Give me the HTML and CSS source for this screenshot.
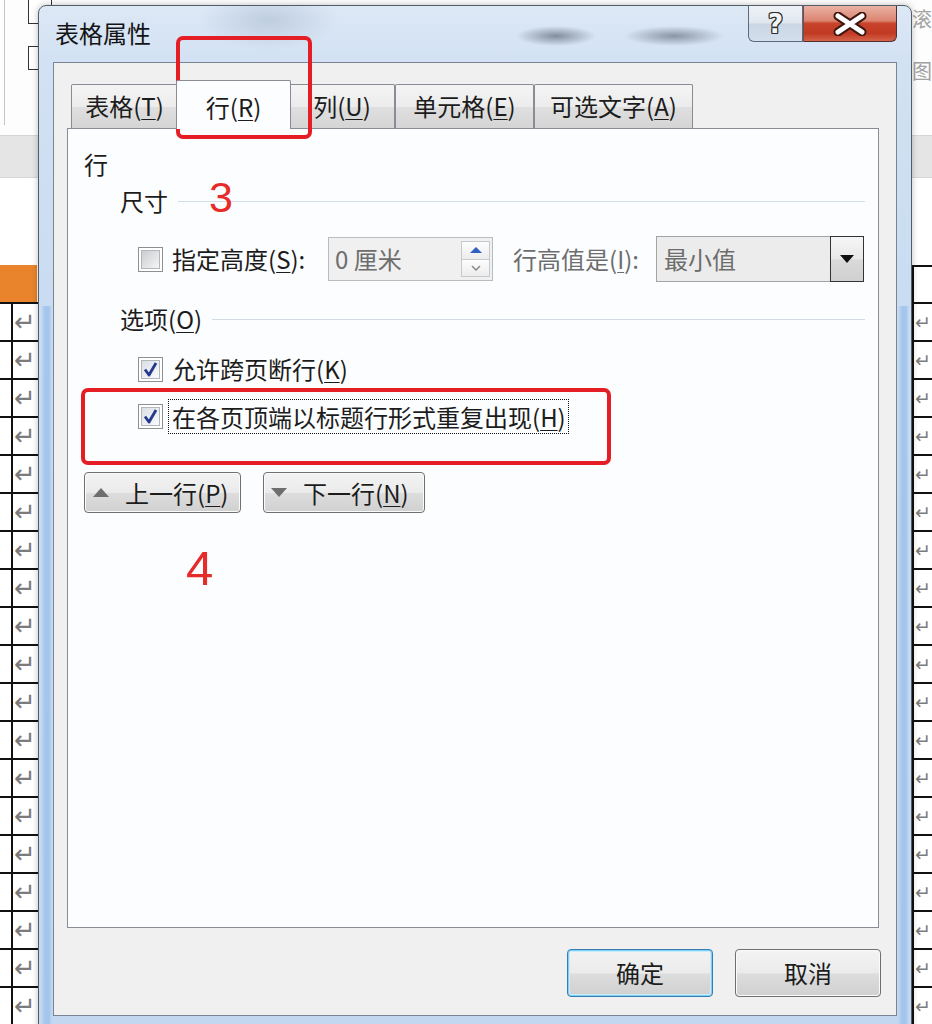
FILE: index.html
```html
<!DOCTYPE html>
<html lang="zh-CN">
<head>
<meta charset="utf-8">
<title>表格属性</title>
<link rel="stylesheet" href="styles.css">
</head>
<body>
<div class="desk">
  <div class="doc">
    <div class="doc-top">
      <div class="doc-top-left">
        <span class="vline"></span>
        <div class="boxes"><span class="dbox"></span><span class="dbox"></span></div>
      </div>
      <div class="doc-top-right"><span>字滚</span><span>全图</span></div>
    </div>
    <div class="doc-band"></div>
    <div class="doc-gap"></div>
    <div class="trow thead"><span class="c1"></span><span class="c2"></span><span class="cm"></span><span class="c4"></span></div>
    <div class="trow"><span class="c1"></span><span class="c2">↵</span><span class="cm"></span><span class="c4">↵</span></div>
    <div class="trow"><span class="c1"></span><span class="c2">↵</span><span class="cm"></span><span class="c4">↵</span></div>
    <div class="trow"><span class="c1"></span><span class="c2">↵</span><span class="cm"></span><span class="c4">↵</span></div>
    <div class="trow"><span class="c1"></span><span class="c2">↵</span><span class="cm"></span><span class="c4">↵</span></div>
    <div class="trow"><span class="c1"></span><span class="c2">↵</span><span class="cm"></span><span class="c4">↵</span></div>
    <div class="trow"><span class="c1"></span><span class="c2">↵</span><span class="cm"></span><span class="c4">↵</span></div>
    <div class="trow"><span class="c1"></span><span class="c2">↵</span><span class="cm"></span><span class="c4">↵</span></div>
    <div class="trow"><span class="c1"></span><span class="c2">↵</span><span class="cm"></span><span class="c4">↵</span></div>
    <div class="trow"><span class="c1"></span><span class="c2">↵</span><span class="cm"></span><span class="c4">↵</span></div>
    <div class="trow"><span class="c1"></span><span class="c2">↵</span><span class="cm"></span><span class="c4">↵</span></div>
    <div class="trow"><span class="c1"></span><span class="c2">↵</span><span class="cm"></span><span class="c4">↵</span></div>
    <div class="trow"><span class="c1"></span><span class="c2">↵</span><span class="cm"></span><span class="c4">↵</span></div>
    <div class="trow"><span class="c1"></span><span class="c2">↵</span><span class="cm"></span><span class="c4">↵</span></div>
    <div class="trow"><span class="c1"></span><span class="c2">↵</span><span class="cm"></span><span class="c4">↵</span></div>
    <div class="trow"><span class="c1"></span><span class="c2">↵</span><span class="cm"></span><span class="c4">↵</span></div>
    <div class="trow"><span class="c1"></span><span class="c2">↵</span><span class="cm"></span><span class="c4">↵</span></div>
    <div class="trow"><span class="c1"></span><span class="c2">↵</span><span class="cm"></span><span class="c4">↵</span></div>
    <div class="trow"><span class="c1"></span><span class="c2">↵</span><span class="cm"></span><span class="c4">↵</span></div>
    <div class="trow"><span class="c1"></span><span class="c2">↵</span><span class="cm"></span><span class="c4">↵</span></div>
  </div>

  <div class="dialog">
    <div class="titlebar">
      <span class="title">表格属性</span>
      <div class="capbtns">
        <span class="cap cap-help">?</span>
        <span class="cap cap-close">
          <svg width="40" height="24" viewBox="0 0 40 24">
            <path d="M8 4 L32 20 M32 4 L8 20" stroke="#3d1710" stroke-width="9" stroke-linecap="round" fill="none"/>
            <path d="M8 4 L32 20 M32 4 L8 20" stroke="#ffffff" stroke-width="5" stroke-linecap="round" fill="none"/>
          </svg>
        </span>
      </div>
    </div>

    <div class="client">
      <div class="tabs">
        <span class="tab t1">表格(<u>T</u>)</span>
        <span class="tab t2 active">行(<u>R</u>)</span>
        <span class="tab t3">列(<u>U</u>)</span>
        <span class="tab t4">单元格(<u>E</u>)</span>
        <span class="tab t5">可选文字(<u>A</u>)</span>
      </div>

      <div class="panel">
        <div class="plabel">行</div>

        <div class="group-head"><span>尺寸</span><span class="gline"></span></div>

        <div class="row-size">
          <span class="cb">
            <svg width="25" height="25" viewBox="0 0 25 25">
              <defs><linearGradient id="g1" x1="0" y1="0" x2="1" y2="1"><stop offset="0" stop-color="#c9cbcf"/><stop offset="1" stop-color="#f7f7f7"/></linearGradient></defs>
              <rect x="0.5" y="0.5" width="24" height="24" fill="#fff" stroke="#8e8f8f"/>
              <rect x="3.5" y="3.5" width="18" height="18" fill="url(#g1)" stroke="#b3b6bb"/>
            </svg>
          </span>
          <span class="lbl lbl-h">指定高度(<u>S</u>):</span>
          <span class="spin">
            <span class="spin-val">0 厘米</span>
            <span class="spin-btns">
              <span class="sb"><span class="arr-up"></span></span>
              <span class="sb">
                <svg width="10" height="6" viewBox="0 0 10 6"><path d="M1 1 L5 5 L9 1" stroke="#8a8a8a" stroke-width="1.5" fill="none"/></svg>
              </span>
            </span>
          </span>
          <span class="lbl lbl-dis lbl-v">行高值是(<u>I</u>):</span>
          <span class="combo">
            <span class="combo-val">最小值</span>
            <span class="combo-btn"><span class="arr-down"></span></span>
          </span>
        </div>

        <div class="group-head gh2"><span>选项(<u>O</u>)</span><span class="gline"></span></div>

        <div class="chk-row r2">
          <span class="cb">
            <svg width="25" height="25" viewBox="0 0 25 25">
              <defs><linearGradient id="g2" x1="0" y1="0" x2="1" y2="1"><stop offset="0" stop-color="#d9dee6"/><stop offset="1" stop-color="#fbfcfd"/></linearGradient></defs>
              <rect x="0.5" y="0.5" width="24" height="24" fill="#fff" stroke="#8e8f8f"/>
              <rect x="3.5" y="3.5" width="18" height="18" fill="url(#g2)" stroke="#b3b6bb"/>
              <path d="M7 12.5 L11 18 L18 6" stroke="#e8ecf5" stroke-width="5" fill="none" stroke-linejoin="round"/>
              <path d="M7 12.5 L11 18 L18 6" stroke="#26398a" stroke-width="2.8" fill="none" stroke-linejoin="round"/>
            </svg>
          </span>
          <span class="lbl">允许跨页断行(<u>K</u>)</span>
        </div>

        <div class="chk-row r3">
          <span class="cb">
            <svg width="25" height="25" viewBox="0 0 25 25">
              <defs><linearGradient id="g3" x1="0" y1="0" x2="1" y2="1"><stop offset="0" stop-color="#d9dee6"/><stop offset="1" stop-color="#fbfcfd"/></linearGradient></defs>
              <rect x="0.5" y="0.5" width="24" height="24" fill="#fff" stroke="#8e8f8f"/>
              <rect x="3.5" y="3.5" width="18" height="18" fill="url(#g3)" stroke="#b3b6bb"/>
              <path d="M7 12.5 L11 18 L18 6" stroke="#e8ecf5" stroke-width="5" fill="none" stroke-linejoin="round"/>
              <path d="M7 12.5 L11 18 L18 6" stroke="#26398a" stroke-width="2.8" fill="none" stroke-linejoin="round"/>
            </svg>
          </span>
          <span class="lbl focus">在各页顶端以标题行形式重复出现(<u>H</u>)</span>
        </div>

        <div class="nav-btns">
          <button class="btn nav nav-prev"><span class="tri tri-up"></span><span class="nav-txt">上一行(<u>P</u>)</span></button>
          <button class="btn nav nav-next"><span class="tri tri-down"></span><span class="nav-txt">下一行(<u>N</u>)</span></button>
        </div>
      </div>

      <div class="footer">
        <button class="btn dlg default">确定</button>
        <button class="btn dlg">取消</button>
      </div>
    </div>
  </div>

  <div class="mark mark-tab"></div>
  <div class="mark mark-opt"></div>
  <span class="num num3">3</span>
  <span class="num num4">4</span>
</div>
</body>
</html>
```

FILE: styles.css
```css
* { box-sizing: border-box; }

body {
  margin: 0;
  font-family: "Noto Sans CJK SC", "Noto Sans", sans-serif;
  color: #1c1c1c;
}

.desk {
  position: relative;
  width: 932px;
  height: 1024px;
  overflow: hidden;
  background: #fff;
}

/* ---------- background document ---------- */
.doc {
  display: flex;
  flex-direction: column;
  width: 932px;
  height: 1024px;
}

.doc-top {
  height: 135px;
  flex-shrink: 0;
  display: flex;
  justify-content: space-between;
  background: #fdfdfd;
}

.doc-top-left { display: flex; }

.vline {
  margin-left: 4px;
  height: 125px;
  border-left: 1px solid #c4c4c4;
}

.boxes {
  margin-left: 23px;
  display: flex;
  flex-direction: column;
}

.dbox {
  width: 24px;
  height: 24px;
  border: 1px solid #333;
  border-top: none;
  background: #fff;
}

.dbox + .dbox {
  margin-top: 22px;
  border-top: 1px solid #333;
}

.doc-top-right {
  width: 40px;
  display: flex;
  flex-direction: column;
  gap: 30px;
  padding-top: 8px;
  font-size: 20px;
  line-height: 22px;
  color: #a2a2a2;
  white-space: nowrap;
}

.doc-band {
  height: 43px;
  flex-shrink: 0;
  background: #e5e5e5;
  border-top: 1px solid #d6d6d6;
  border-bottom: 1px solid #d6d6d6;
}

.doc-gap { height: 87px; flex-shrink: 0; background: #fff; }

.trow {
  display: flex;
  height: 38px;
  flex-shrink: 0;
  border-top: 2px solid #111;
}

.thead { height: 37px; border-top: none; }

.c1 { width: 13px; border-right: 2px solid #111; }
.c2 {
  width: 24px;
  display: flex;
  align-items: center;
  justify-content: center;
  font-family: "DejaVu Sans", sans-serif;
  font-size: 26px;
  line-height: 1;
  color: #7c7c7c;
}
.cm { flex: 1; }
.c4 {
  width: 20px;
  border-left: 2px solid #111;
  display: flex;
  align-items: center;
  justify-content: center;
  font-family: "DejaVu Sans", sans-serif;
  font-size: 19px;
  line-height: 1;
  color: #7c7c7c;
}

.thead .c1,
.thead .c2 { background: #e9842c; border-right: none; }
.thead .c4 { border-top: 2px solid #111; }

/* ---------- dialog window ---------- */
.dialog {
  position: absolute;
  left: 38px;
  top: 5px;
  width: 874px;
  height: 1036px;
  border: 1px solid #525c6a;
  border-radius: 8px 8px 0 0;
  padding: 0 14px;
  display: flex;
  flex-direction: column;
  background:
    radial-gradient(ellipse 40px 10px at 517px 30px, rgba(60, 70, 85, 0.55), rgba(60, 70, 85, 0)),
    radial-gradient(ellipse 50px 10px at 635px 30px, rgba(60, 70, 85, 0.5), rgba(60, 70, 85, 0)),
    radial-gradient(ellipse 70px 30px at 230px 14px, rgba(120, 140, 170, 0.28), rgba(120, 140, 170, 0)),
    linear-gradient(to right, rgba(160, 195, 236, 0) 2px, rgba(160, 195, 236, 0.9) 6px, rgba(160, 195, 236, 0.9) 10px, rgba(160, 195, 236, 0) 13px) left 0 top 300px / 14px 100% no-repeat,
    linear-gradient(to left, rgba(160, 195, 236, 0) 2px, rgba(160, 195, 236, 0.9) 5px, rgba(160, 195, 236, 0.9) 9px, rgba(160, 195, 236, 0) 13px) right 0 top 300px / 14px 100% no-repeat,
    linear-gradient(to bottom, #dde8f5 0, #d2e1f3 56px, #c9dcf1 300px, #c3d8f0 100%);
  box-shadow: 0 0 6px rgba(0, 0, 0, 0.25);
}

.titlebar {
  height: 56px;
  flex-shrink: 0;
  display: flex;
  justify-content: space-between;
  align-items: flex-start;
}

.title {
  margin: 12px 0 0 2px;
  font-size: 24px;
  line-height: 30px;
  color: #141414;
}

.capbtns { display: flex; }

.cap {
  height: 36px;
  display: flex;
  align-items: center;
  justify-content: center;
}

.cap-help {
  width: 55px;
  border: 1px solid #5b6a7e;
  border-top: none;
  border-radius: 0 0 0 6px;
  background: linear-gradient(#eef2f7, #e0e7ef 48%, #cbd6e3 52%, #d3dfec);
  font-family: "DejaVu Sans", sans-serif;
  font-weight: bold;
  font-size: 26px;
  color: #f4f4f4;
  text-shadow: 1px 0 0 #2e2e2e, -1px 0 0 #2e2e2e, 0 1px 0 #2e2e2e, 0 -1px 0 #2e2e2e,
    1px 1px 0 #2e2e2e, -1px -1px 0 #2e2e2e, 1px -1px 0 #2e2e2e, -1px 1px 0 #2e2e2e;
}

.cap-close {
  width: 94px;
  border: 1px solid #4e3030;
  border-top: none;
  border-left: 1px solid #7a4a4a;
  border-radius: 0 0 6px 0;
  background: linear-gradient(#eab2a4, #db8470 42%, #c8432b 50%, #c13a23 78%, #d5634a);
}

.client {
  flex: none;
  background: #f0f0f0;
  border: 1px solid #7a8594;
  display: flex;
  flex-direction: column;
}

/* tabs */
.tabs {
  display: flex;
  align-items: flex-end;
  height: 48px;
  margin-top: 17px;
  padding-left: 17px;
}

.tab {
  height: 44px;
  border: 1px solid #898c95;
  border-bottom: none;
  border-radius: 2px 2px 0 0;
  background: linear-gradient(#f4f4f4, #ececec 50%, #dfdfdf 52%, #d5d5d5);
  font-size: 24px;
  line-height: 42px;
  text-align: center;
  color: #1c1c1c;
  white-space: nowrap;
}

.t1 { width: 107px; }
.t3 { width: 106px; }
.t4 { width: 139px; }
.t5 { width: 159px; }

.tab.active {
  width: 115px;
  height: 49px;
  margin: 0 -2px -1px -2px;
  padding-top: 4px;
  line-height: 44px;
  position: relative;
  z-index: 1;
  background: #fcfdfe;
}

u { text-decoration: underline; text-underline-offset: 3px; text-decoration-thickness: 1px; }

/* panel */
.panel {
  height: 800px;
  margin: 0 17px 0 13px;
  border: 1px solid #898c95;
  background: #fcfdfe;
  display: flex;
  flex-direction: column;
  font-size: 24px;
}

.plabel {
  margin-top: 20px;
  padding-left: 16px;
  line-height: 30px;
}

.group-head {
  display: flex;
  align-items: center;
  height: 30px;
  margin-top: 7px;
  padding-left: 52px;
  padding-right: 13px;
  line-height: 30px;
}

.gh2 { margin-top: 22px; }

.gline {
  flex: 1;
  height: 1px;
  margin-left: 10px;
  background: #d3dbe4;
}

.row-size {
  display: flex;
  align-items: center;
  height: 46px;
  margin-top: 20px;
  padding-left: 70px;
}

.cb { width: 25px; height: 25px; display: block; flex-shrink: 0; }
.cb svg { display: block; }

.lbl { line-height: 30px; white-space: nowrap; }
.lbl-h { width: 156px; margin-left: 9px; }
.lbl-dis { color: #6d6d6d; }
.lbl-v { width: 143px; margin-left: 20px; }

.spin {
  width: 165px;
  height: 44px;
  display: flex;
  align-items: center;
  border: 1px solid #b8bbc0;
  background: #f0f0f0;
}

.spin-val {
  flex: 1;
  padding-left: 6px;
  color: #6d6d6d;
  line-height: 30px;
}

.spin-btns {
  width: 29px;
  height: 36px;
  margin-right: 2px;
  display: flex;
  flex-direction: column;
}

.sb {
  flex: 1;
  border: 1px solid #c6c9ce;
  background: linear-gradient(#fdfdfd, #ececec);
  display: flex;
  align-items: center;
  justify-content: center;
}

.sb + .sb { border-top: none; }

.arr-up {
  width: 0;
  height: 0;
  border-left: 6px solid transparent;
  border-right: 6px solid transparent;
  border-bottom: 6px solid #2f5fbf;
}

.combo {
  width: 208px;
  height: 46px;
  display: flex;
  border: 1px solid #a3a3a3;
  background: #ececec;
}

.combo-val {
  flex: 1;
  padding-left: 7px;
  color: #6d6d6d;
  line-height: 44px;
}

.combo-btn {
  width: 34px;
  margin: -1px -1px -1px 0;
  border: 1px solid #333;
  background: linear-gradient(#f6f6f6, #e8e8e8 50%, #dadada 52%, #d0d0d0);
  display: flex;
  align-items: center;
  justify-content: center;
}

.arr-down {
  width: 0;
  height: 0;
  border-left: 7px solid transparent;
  border-right: 7px solid transparent;
  border-top: 8px solid #111;
}

.chk-row {
  display: flex;
  align-items: center;
  padding-left: 70px;
}

.r2 { height: 30px; margin-top: 20px; }
.r2 .lbl { margin-left: 9px; }

.r3 { height: 35px; margin-top: 15px; }
.r3 .lbl.focus {
  margin-left: 5px;
  padding: 0 2px 0 3px;
  border: 1px dotted #111;
  line-height: 33px;
}

.nav-btns {
  display: flex;
  gap: 22px;
  margin-top: 38px;
  padding-left: 16px;
}

.btn {
  font-family: "Noto Sans CJK SC", "Noto Sans", sans-serif;
  font-size: 24px;
  color: #1c1c1c;
  border: 1px solid #707070;
  border-radius: 4px;
  background: linear-gradient(#f3f3f3, #ebebeb 50%, #dddddd 52%, #d0d0d0);
  box-shadow: inset 0 0 0 1px #fbfbfb;
  padding: 0;
  margin: 0;
}

.nav {
  height: 41px;
  display: flex;
  align-items: center;
  gap: 16px;
  padding-left: 8px;
  line-height: 30px;
}

.nav-txt { white-space: nowrap; }

.nav-prev { width: 157px; }
.nav-next { width: 162px; padding-left: 7px; }

.tri { flex-shrink: 0; width: 0; height: 0; border-left: 8px solid transparent; border-right: 8px solid transparent; }
.tri-up { border-bottom: 9px solid #6e6e6e; }
.tri-down { border-top: 9px solid #6e6e6e; }

.footer {
  display: flex;
  justify-content: flex-end;
  gap: 22px;
  padding: 21px 15px 18px 0;
}

.dlg {
  width: 146px;
  height: 48px;
  line-height: 30px;
}

.dlg.default {
  border-color: #3a7db3;
  box-shadow: inset 0 0 0 1px #7fd0f5, inset 0 0 0 2px #c8ecfb;
}

/* ---------- annotations ---------- */
.mark {
  position: absolute;
  border: 4px solid #e41e24;
  border-radius: 7px;
}

.mark-tab { left: 176px; top: 36px; width: 136px; height: 103px; }
.mark-opt { left: 81px; top: 388px; width: 530px; height: 77px; }

.num {
  position: absolute;
  font-family: "Liberation Sans", sans-serif;
  color: #e62b2b;
  line-height: 1;
}

.num3 { left: 209px; top: 176px; font-size: 43px; }
.num4 { left: 186px; top: 544px; font-size: 49px; }
```
